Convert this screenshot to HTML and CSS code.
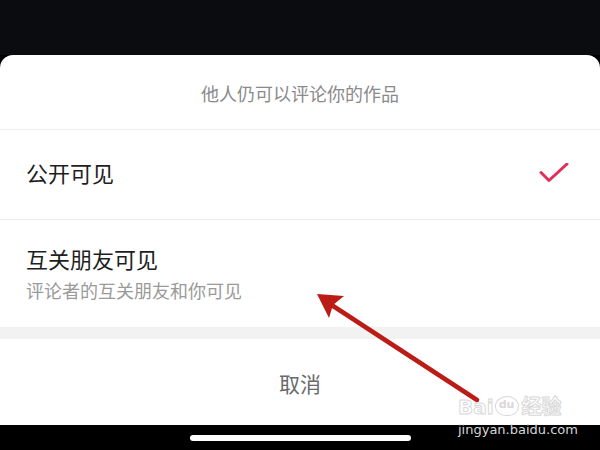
FILE: index.html
```html
<!DOCTYPE html>
<html lang="zh-CN">
<head>
    <meta charset="UTF-8">
    <meta name="viewport" content="width=device-width, initial-scale=1.0">
    <title>评论权限</title>
    <link rel="stylesheet" href="styles.css">
</head>
<body>

    <div class="screen">
        <div class="topDim"></div>

        <!-- Bottom sheet -->
        <div class="sheet">
            <div class="sheetHeader">他人仍可以评论你的作品</div>

            <div class="option">
                <div class="optionTitle">公开可见</div>
                <svg class="check" width="30" height="22" viewBox="0 0 30 22">
                    <polyline points="2,9.5 10,17.5 28,1" fill="none" stroke="#e0305a" stroke-width="3" stroke-linecap="round" stroke-linejoin="round"/>
                </svg>
            </div>

            <div class="option optionTall">
                <div class="optionTitle">互关朋友可见</div>
                <div class="optionSub">评论者的互关朋友和你可见</div>
            </div>

            <div class="gap"></div>

            <div class="cancel">取消</div>
        </div>

        <div class="homeBar">
            <div class="homeIndicator"></div>
        </div>

        <!-- annotation arrow -->
        <svg class="arrow" width="600" height="450" viewBox="0 0 600 450">
            <line x1="477" y1="400" x2="327" y2="302" stroke="#bb1d16" stroke-width="4.5" stroke-linecap="round"/>
            <polygon points="317,294 344,296 333,305 329,318" fill="#bb1d16"/>
        </svg>

        <!-- watermark -->
        <div class="watermark">
            <div class="wmLogo">
                <span class="wmHollow">Bai</span>
                <span class="wmPaw">du</span>
                <span class="wmHollow">经验</span>
            </div>
            <div class="wmUrl">jingyan.baidu.com</div>
        </div>
    </div>

</body>
</html>
```

FILE: styles.css
```css
* {
    box-sizing: border-box;
    margin: 0;
    padding: 0;
}
body {
    width: 600px;
    height: 450px;
    overflow: hidden;
    background: #000;
    font-family: "Noto Sans CJK SC", "Noto Sans", sans-serif;
}
.screen {
    position: relative;
    width: 600px;
    height: 450px;
    display: flex;
    flex-direction: column;
}
.topDim {
    height: 55px;
    background: #0b0c10;
}
.sheet {
    height: 370px;
    background: #fff;
    border-radius: 13px 13px 0 0;
    display: flex;
    flex-direction: column;
}
.sheetHeader {
    height: 75px;
    border-bottom: 1px solid #eeeeee;
    display: flex;
    justify-content: center;
    align-items: center;
    padding-top: 2px;
    font-size: 18px;
    color: #8a8a8a;
}
.option {
    height: 90px;
    padding: 0 31px 6px 26px;
    border-bottom: 1px solid #ececec;
    display: flex;
    justify-content: space-between;
    align-items: center;
}
.option .check {
    margin-top: 4px;
}
.optionTall {
    height: 107px;
    border-bottom: none;
    flex-direction: column;
    align-items: flex-start;
    justify-content: flex-start;
    padding-top: 23px;
}
.optionTitle {
    font-size: 22px;
    line-height: 30px;
    color: #1e1e1e;
}
.optionSub {
    margin-top: 5px;
    font-size: 18px;
    line-height: 24px;
    color: #9a9a9a;
}
.check {
    display: block;
}
.gap {
    height: 12px;
    background: #f2f2f2;
}
.cancel {
    flex: 1;
    text-align: center;
    padding-top: 29px;
    font-size: 21px;
    line-height: 30px;
    color: #6a6a6a;
}
.homeBar {
    height: 25px;
    background: #000;
    display: flex;
    justify-content: center;
    padding-top: 10px;
}
.homeIndicator {
    width: 221px;
    height: 6px;
    border-radius: 3px;
    background: #fff;
}
.arrow {
    position: absolute;
    left: 0;
    top: 0;
    pointer-events: none;
}
.watermark {
    position: absolute;
    left: 458px;
    top: 392px;
    width: 112px;
    font-family: "DejaVu Sans", "Noto Sans CJK SC", sans-serif;
}
.wmLogo {
    display: flex;
    align-items: flex-end;
    height: 26px;
}
.wmHollow {
    font-size: 20px;
    font-weight: bold;
    line-height: 22px;
    color: transparent;
    -webkit-text-stroke: 1px #d8d8d8;
}
.wmPaw {
    display: inline-block;
    width: 24px;
    height: 20px;
    margin: 0 3px 2px 1px;
    border: 1.5px solid #d8d8d8;
    border-radius: 50% 50% 45% 45%;
    font-size: 11px;
    font-weight: bold;
    line-height: 16px;
    text-align: center;
    color: #d8d8d8;
}
.wmUrl {
    margin-top: 4px;
    font-size: 13px;
    line-height: 16px;
    color: #d6d6d6;
}
```
